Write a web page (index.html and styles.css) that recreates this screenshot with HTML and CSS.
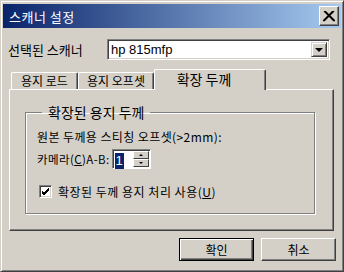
FILE: index.html
```html
<!DOCTYPE html>
<html>
<head>
    <title>스캐너 설정</title>
    <link rel="stylesheet" href="styles.css">
</head>
<body>
    <div class="window">
        <div class="titlebar">
            <span class="title">스캐너 설정</span>
            <span class="close">
                <svg width="12" height="11" viewBox="0 0 12 11">
                    <path d="M1 0 L11 10 M11 0 L1 10 M2 0 L12 10 M10 0 L0 10" stroke="#000" stroke-width="1.3" fill="none"/>
                </svg>
            </span>
        </div>

        <div class="scanner-row">
            <label class="scanner-label">선택된 스캐너</label>
            <div class="combo">
                <span class="combo-text">hp 815mfp</span>
                <span class="combo-btn"><span class="arrow"></span></span>
            </div>
        </div>

        <div class="tabs">
            <div class="tab tab-load">용지 로드</div>
            <div class="tab tab-offset">용지 오프셋</div>
            <div class="tab active">확장 두께</div>
        </div>

        <div class="panel">
            <fieldset class="group">
                <legend>확장된 용지 두께</legend>
                <div class="line">원본 두께용 스티칭 오프셋(&gt;2mm):</div>
                <div class="camera-row">
                    <span class="camera-label">카메라(<u>C</u>)A-B:</span>
                    <div class="spin">
                        <span class="spin-value"><span class="sel">1</span></span>
                        <span class="spin-btns">
                            <span class="spin-btn"><span class="up"></span></span>
                            <span class="spin-btn"><span class="down"></span></span>
                        </span>
                    </div>
                </div>
                <div class="check-row">
                    <span class="checkbox">
                        <svg width="9" height="9" viewBox="0 0 9 9">
                            <path d="M1 4 L3 6 L8 1 M1 5 L3 7 L8 2 M1 6 L3 8 L8 3" stroke="#000" stroke-width="1" fill="none"/>
                        </svg>
                    </span>
                    <span>확장된 두께 용지 처리 사용(<u>U</u>)</span>
                </div>
            </fieldset>
        </div>

        <div class="buttons">
            <button class="btn default">확인</button>
            <button class="btn">취소</button>
        </div>
    </div>
</body>
</html>
```

FILE: styles.css
```css
body {
    margin: 0;
    font-family: "Noto Sans CJK KR", "Noto Sans", sans-serif;
    font-size: 12px;
    color: #000;
    background-color: #d4d0c8;
}

.window {
    width: 344px;
    height: 272px;
    box-sizing: border-box;
    background-color: #d4d0c8;
    border: 1px solid;
    border-color: #d4d0c8 #404040 #404040 #d4d0c8;
    box-shadow: inset 1px 1px 0 #fff, inset -1px -1px 0 #808080;
    padding: 2px;
}

.titlebar {
    height: 24px;
    margin-top: 1px;
    background: linear-gradient(to right, #0a246a, #a6caf0);
    display: flex;
    align-items: center;
    justify-content: space-between;
    padding: 0 2px 0 6px;
}

.title {
    color: #fff;
    font-size: 13px;
    letter-spacing: 0.5px;
}

.close {
    width: 20px;
    height: 20px;
    box-sizing: border-box;
    background-color: #d4d0c8;
    border: 1px solid;
    border-color: #fff #404040 #404040 #fff;
    box-shadow: inset -1px -1px 0 #808080;
    display: flex;
    align-items: center;
    justify-content: center;
}

.scanner-row {
    display: flex;
    align-items: center;
    margin-top: 11px;
    padding-left: 5px;
}

.scanner-label {
    width: 99px;
    font-size: 13px;
}

.combo {
    width: 223px;
    height: 21px;
    box-sizing: border-box;
    background-color: #fff;
    border: 1px solid;
    border-color: #808080 #fff #fff #808080;
    box-shadow: inset 1px 1px 0 #404040, inset -1px -1px 0 #d4d0c8;
    display: flex;
    align-items: center;
    justify-content: space-between;
    padding: 2px;
}

.combo-text {
    padding-left: 1px;
    font-family: "Liberation Sans", Arial, sans-serif;
    font-size: 13px;
}

.combo-btn {
    width: 16px;
    height: 15px;
    box-sizing: border-box;
    background-color: #d4d0c8;
    border: 1px solid;
    border-color: #d4d0c8 #404040 #404040 #d4d0c8;
    box-shadow: inset 1px 1px 0 #fff, inset -1px -1px 0 #808080;
    display: flex;
    align-items: center;
    justify-content: center;
}

.arrow {
    width: 0;
    height: 0;
    border-left: 4px solid transparent;
    border-right: 4px solid transparent;
    border-top: 4px solid #000;
}

.tabs {
    display: flex;
    align-items: flex-end;
    margin-top: 9px;
    padding-left: 8px;
    height: 20px;
}

.tab {
    height: 17px;
    box-sizing: border-box;
    border: 1px solid;
    border-bottom: none;
    border-color: #fff #404040 #fff #fff;
    box-shadow: inset -1px 0 0 #808080;
    border-radius: 2px 2px 0 0;
    font-size: 12px;
    line-height: 15px;
    text-align: center;
    white-space: nowrap;
}

.tab-load {
    width: 67px;
}

.tab-offset {
    width: 76px;
}

.tab.active {
    height: 21px;
    margin-bottom: -1px;
    width: 112px;
    font-size: 14px;
    line-height: 19px;
    background-color: #d4d0c8;
    padding-right: 12px;
}

.panel {
    width: 325px;
    height: 142px;
    margin-left: 6px;
    box-sizing: border-box;
    border: 1px solid;
    border-color: #fff #404040 #404040 #fff;
    box-shadow: inset -1px -1px 0 #808080;
    padding: 12px 0 0 15px;
}

.group {
    width: 290px;
    height: 112px;
    box-sizing: border-box;
    margin: 0;
    padding: 6px 0 0 11px;
    border: 1px solid #808080;
    box-shadow: inset 1px 1px 0 #fff, 1px 1px 0 #fff;
}

.group legend {
    font-size: 14px;
    padding: 0 6px;
    margin-left: 5px;
}

.line {
    letter-spacing: 0.4px;
}

.camera-row {
    display: flex;
    align-items: center;
    margin-top: 4px;
}

.camera-label {
    font-size: 11.5px;
    letter-spacing: 0.4px;
}

.spin {
    width: 39px;
    height: 20px;
    box-sizing: border-box;
    background-color: #fff;
    border: 1px solid;
    border-color: #808080 #fff #fff #808080;
    box-shadow: inset 1px 1px 0 #404040;
    display: flex;
    padding: 1px;
    margin-left: 2px;
}

.spin-value {
    flex: 1;
    padding-left: 1px;
}

.sel {
    background-color: #0a246a;
    color: #fff;
    font-family: "Liberation Sans", Arial, sans-serif;
    font-size: 13px;
    line-height: 16px;
    display: inline-block;
    padding: 0 1px;
}

.spin-btns {
    display: flex;
    flex-direction: column;
    width: 16px;
}

.spin-btn {
    flex: 1;
    box-sizing: border-box;
    background-color: #d4d0c8;
    border: 1px solid;
    border-color: #fff #404040 #404040 #fff;
    display: flex;
    align-items: center;
    justify-content: center;
}

.up {
    border-left: 2px solid transparent;
    border-right: 2px solid transparent;
    border-bottom: 2px solid #000;
}

.down {
    border-left: 2px solid transparent;
    border-right: 2px solid transparent;
    border-top: 2px solid #000;
}

.check-row {
    display: flex;
    align-items: center;
    margin-top: 14px;
    padding-left: 2px;
    letter-spacing: 0.5px;
}

.checkbox {
    width: 13px;
    height: 13px;
    box-sizing: border-box;
    background-color: #fff;
    border: 1px solid;
    border-color: #808080 #fff #fff #808080;
    box-shadow: inset 1px 1px 0 #404040, inset -1px -1px 0 #d4d0c8;
    display: flex;
    align-items: center;
    justify-content: center;
    margin-right: 6px;
}

.buttons {
    display: flex;
    justify-content: flex-end;
    gap: 7px;
    margin-top: 7px;
    padding-right: 5px;
}

.btn {
    width: 75px;
    height: 23px;
    box-sizing: border-box;
    background-color: #d4d0c8;
    font-family: "Noto Sans CJK KR", sans-serif;
    font-size: 12px;
    padding: 0;
    border: 1px solid;
    border-color: #fff #404040 #404040 #fff;
    box-shadow: inset -1px -1px 0 #808080;
}

.btn.default {
    border: 1px solid #000;
    box-shadow: inset 1px 1px 0 #fff, inset -1px -1px 0 #404040, inset -2px -2px 0 #808080;
}
```
